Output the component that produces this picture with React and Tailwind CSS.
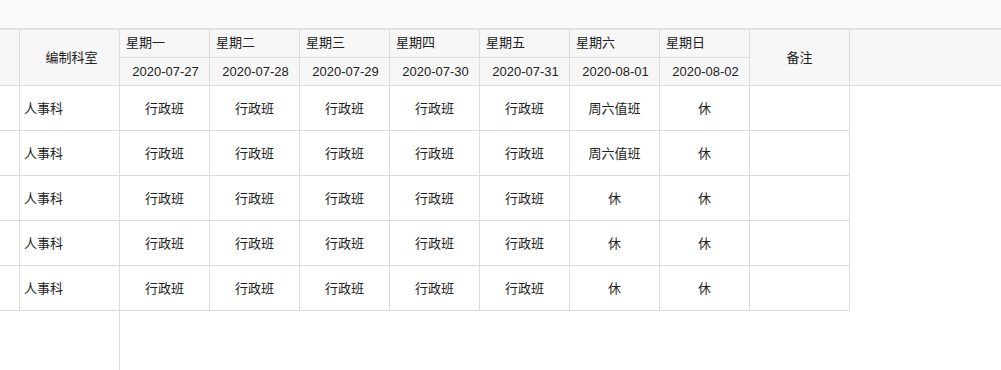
import React from "react";

const days = [
  ["星期一", "2020-07-27"],
  ["星期二", "2020-07-28"],
  ["星期三", "2020-07-29"],
  ["星期四", "2020-07-30"],
  ["星期五", "2020-07-31"],
  ["星期六", "2020-08-01"],
  ["星期日", "2020-08-02"],
];

const rows = [
  ["行政班", "行政班", "行政班", "行政班", "行政班", "周六值班", "休"],
  ["行政班", "行政班", "行政班", "行政班", "行政班", "周六值班", "休"],
  ["行政班", "行政班", "行政班", "行政班", "行政班", "休", "休"],
  ["行政班", "行政班", "行政班", "行政班", "行政班", "休", "休"],
  ["行政班", "行政班", "行政班", "行政班", "行政班", "休", "休"],
];

const font = {
  fontFamily: '"Liberation Sans", "Noto Sans CJK SC", sans-serif',
};

export default function App() {
  return (
    <div
      className="h-[370px] w-[1001px] overflow-hidden bg-white text-[13px] leading-none text-[#222] flex flex-col"
      style={font}
    >
      <div className="h-[30px] shrink-0 bg-[#fafafa] border-b-2 border-[#e2e2e2]" />

      {/* header */}
      <div className="grid grid-cols-[20px_100px_repeat(7,90px)_100px_1fr] grid-rows-[28px_28px] bg-[#f7f7f7] shrink-0">
        <div className="row-span-2 border-r border-b border-[#dddddd]" />
        <div className="row-span-2 border-r border-b border-[#dddddd] flex items-center justify-center pl-[4px]">
          编制科室
        </div>
        {days.map(([d], i) => (
          <div
            key={"d" + i}
            className="border-r border-b border-[#dddddd] flex items-center pl-[6px] pb-[2px]"
            style={{ gridColumnStart: i + 3, gridRowStart: 1 }}
          >
            {d}
          </div>
        ))}
        {days.map(([, dt], i) => (
          <div
            key={"t" + i}
            className="border-r border-b border-[#dddddd] flex items-center justify-center pl-[2px]"
            style={{ gridColumnStart: i + 3, gridRowStart: 2 }}
          >
            {dt}
          </div>
        ))}
        <div className="col-start-10 row-start-1 row-span-2 border-r border-b border-[#dddddd] flex items-center justify-center">
          备注
        </div>
        <div className="col-start-11 row-start-1 row-span-2 border-b border-[#dddddd]" />
      </div>

      {/* body */}
      <div className="flex flex-col shrink-0 w-[850px]">
        {rows.map((r, ri) => (
          <div
            key={ri}
            className="grid grid-cols-[20px_100px_repeat(7,90px)_100px] h-[45px]"
          >
            <div className="border-r border-b border-[#dddddd]" />
            <div className="border-r border-b border-[#dddddd] flex items-center pl-[4px]">
              人事科
            </div>
            {r.map((c, ci) => (
              <div
                key={ci}
                className="border-r border-b border-[#dddddd] flex items-center justify-center"
              >
                {c}
              </div>
            ))}
            <div className="border-r border-b border-[#dddddd]" />
          </div>
        ))}
      </div>

      <div className="flex-1 flex">
        <div className="w-[120px] border-r border-[#dddddd]" />
      </div>
    </div>
  );
}
